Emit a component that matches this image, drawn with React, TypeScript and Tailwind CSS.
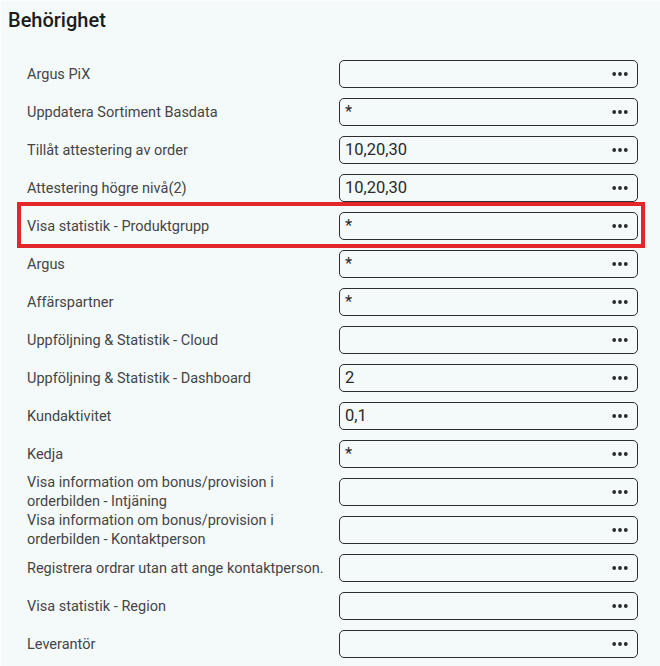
import React from "react";

type Row = { label: string; value: string; highlight?: boolean };

const rows: Row[] = [
  { label: "Argus PiX", value: "" },
  { label: "Uppdatera Sortiment Basdata", value: "*" },
  { label: "Tillåt attestering av order", value: "10,20,30" },
  { label: "Attestering högre nivå(2)", value: "10,20,30" },
  { label: "Visa statistik - Produktgrupp", value: "*", highlight: true },
  { label: "Argus", value: "*" },
  { label: "Affärspartner", value: "*" },
  { label: "Uppföljning & Statistik - Cloud", value: "" },
  { label: "Uppföljning & Statistik - Dashboard", value: "2" },
  { label: "Kundaktivitet", value: "0,1" },
  { label: "Kedja", value: "*" },
  { label: "Visa information om bonus/provision i orderbilden - Intjäning", value: "" },
  { label: "Visa information om bonus/provision i orderbilden - Kontaktperson", value: "" },
  { label: "Registrera ordrar utan att ange kontaktperson.", value: "" },
  { label: "Visa statistik - Region", value: "" },
  { label: "Leverantör", value: "" },
];

function Dots() {
  return (
    <svg width="16" height="6" viewBox="0 0 16 6" className="shrink-0">
      <circle cx="2.2" cy="3" r="1.9" fill="#2a2a2a" />
      <circle cx="8" cy="3" r="1.9" fill="#2a2a2a" />
      <circle cx="13.8" cy="3" r="1.9" fill="#2a2a2a" />
    </svg>
  );
}

export default function App() {
  return (
    <div
      className="w-[660px] h-[666px] overflow-hidden bg-[#f4f9f9] border-l border-t border-[#fbfdfd]"
      style={{ fontFamily: "Roboto, 'Liberation Sans', sans-serif" }}
    >
      <h2 className="pl-[7px] pt-[6px] text-[20px] leading-[26px] font-medium text-[#1b1c1d]">
        Behörighet
      </h2>
      <div className="mt-[22px] pl-[26px] pr-[22px] flex flex-col">
        {rows.map((r, i) => (
          <div key={i} className="relative flex items-center h-[38px]">
            {r.highlight && (
              <div className="pointer-events-none absolute top-[-5px] bottom-[-3px] left-[-10px] right-[-7px] border-[4px] border-[#e3262a]" />
            )}
            <div className="flex-1 pr-2 text-[14.5px] leading-[19px] text-[#444546]">
              {r.label}
            </div>
            <div className="w-[299px] h-[28px] shrink-0 flex items-center justify-between border border-[#2d2d2d] rounded-[5px] pl-[5px] pr-[9px]">
              <span className="text-[16.5px] leading-[20px] text-[#2a2a2a]">{r.value}</span>
              <Dots />
            </div>
          </div>
        ))}
      </div>
    </div>
  );
}
